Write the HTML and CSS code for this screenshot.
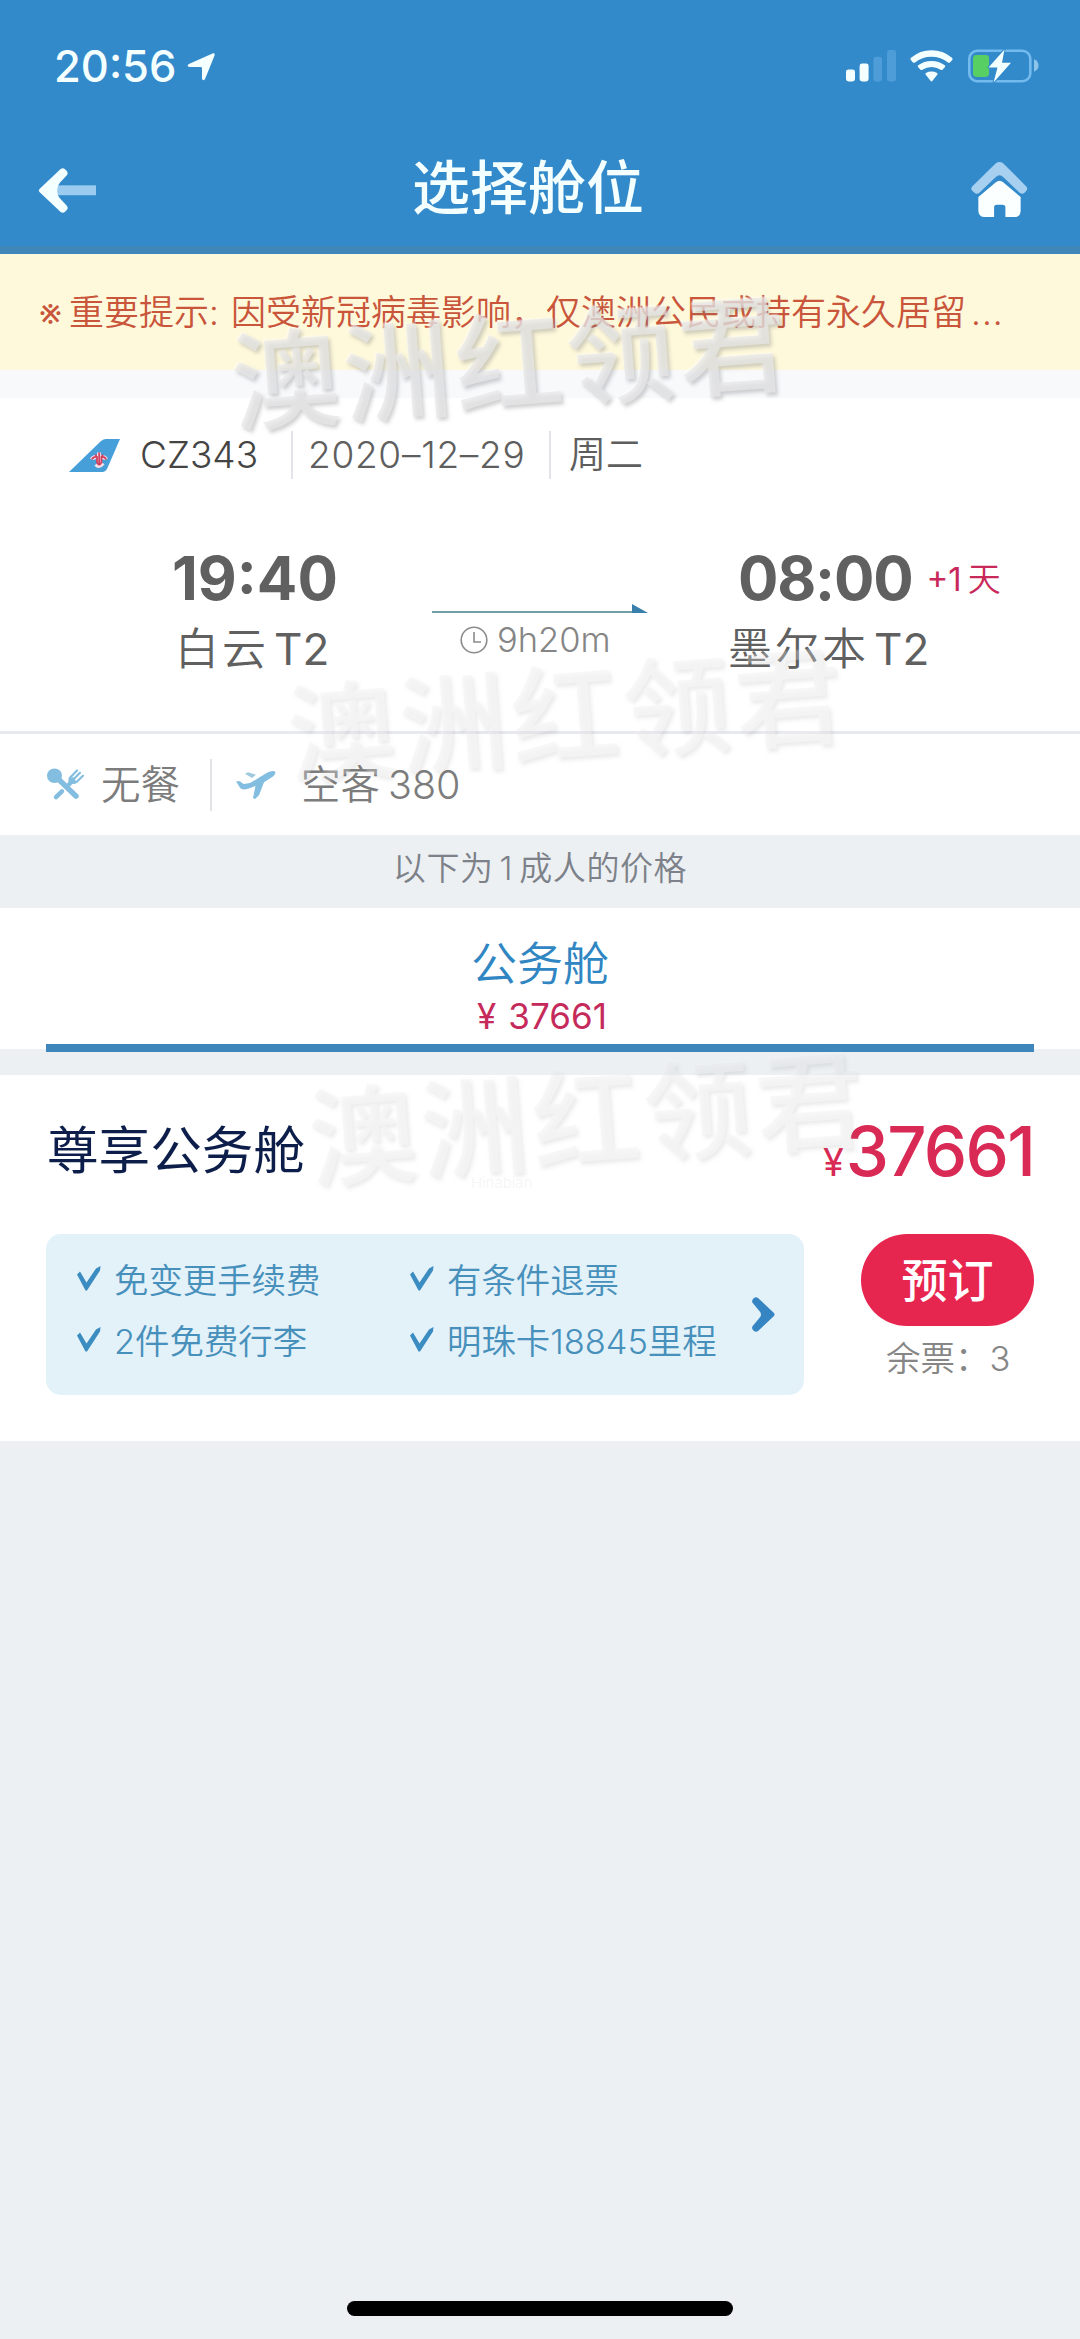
FILE: index.html
```html
<!DOCTYPE html>
<html lang="zh-CN">
<head>
<meta charset="utf-8">
<title>选择舱位</title>
<link rel="stylesheet" href="styles.css">
</head>
<body>
<div class="app">
  <header class="top">
    <div class="status">
      <span class="clock">20:56</span>
      <svg class="loc" viewBox="0 0 30 32" width="29" height="29" preserveAspectRatio="none"><path d="M27 1.5Q29 1 28.6 3.5L19 29Q18 31.500 16.500 31Q15.600 30.500 15.500 29V18Q15.500 16.500 14 16.500H3Q0 16 .8 14.600Q1 13.800 2.500 13Z" fill="#f4ffff"/></svg>
      <div class="indicators">
        <svg width="50" height="32" viewBox="0 0 50 33" preserveAspectRatio="none"><g fill="#f4ffff"><rect y="20" width="9" height="12.500" rx="2.500"/><rect x="13.600" y="14" width="9" height="18.500" rx="2.500"/></g><g fill="#4e9dd8"><rect x="27.500" y="7" width="8.500" height="25.500" rx="2.500"/><rect x="41" y="0" width="9" height="32.500" rx="2.500"/></g></svg>
        <svg class="wifi" width="43" height="32" viewBox="0 0 43 33" preserveAspectRatio="none" fill="#f4ffff"><path d="M.6 10Q0 9 1 8Q10 .3 21.500 .3T42 8Q43 9 42.400 10L40 12.800Q39 13.600 38 12.800Q31 7 21.500 7T5 12.800Q4 13.600 3 12.800Z"/><path d="M8 17.500Q7.300 16.600 8.200 15.700Q14 11.300 21.500 11.300T34.800 15.700Q35.700 16.600 35 17.500L32.500 20.300Q31.500 21 30.600 20.300Q26.500 17.500 21.500 17.500T12.400 20.300Q11.500 21 10.500 20.300Z"/><path d="M15.600 25.200Q15 24.500 15.900 23.700Q18.500 22.200 21.500 22.200T27.100 23.700Q28 24.500 27.400 25.200L22.500 31.800Q21.500 33 20.500 31.800Z"/></svg>
        <svg width="72" height="36" viewBox="0 0 72 38" preserveAspectRatio="none"><rect x="1.300" y="3" width="61" height="32" rx="8" fill="none" stroke="#73bbee" stroke-width="2.600"/><path d="M66 12Q70.500 14 70.500 18.500T66 25Z" fill="#8cc4ea"/><rect x="5" y="7.500" width="16" height="23" rx="3.500" fill="#58cf62"/><path d="M36.500 1.500L20.500 20.500H29.500L25.500 36.500L43 15.500H34Z" fill="#f4ffff" stroke="#338acb" stroke-width="2" paint-order="stroke" stroke-linejoin="round"/></svg>
      </div>
    </div>
    <div class="nav">
      <svg class="back" width="59" height="47" viewBox="0 0 60 50" preserveAspectRatio="none"><rect x="18" y="19.500" width="41" height="10.500" fill="#9ccbf0"/><path d="M1.500 23.500L23 2.200Q25.500 .5 27.500 2.500L29.500 4.500Q31 6.500 29.500 8.500L22 17Q19.500 20 19.500 25T22 33L29.500 41.500Q31 43.500 29.500 45.500L27.500 47.500Q25.500 49.500 23 47.800L1.500 26.500Q0 25 1.500 23.500Z" fill="#f4ffff"/></svg>
      <h1>选择舱位</h1>
      <svg class="home" width="59" height="57" viewBox="0 0 60 60" preserveAspectRatio="none"><path d="M26 2.500Q30 -.5 34 2.500L57.500 27Q59 29 57.500 31L55.500 33.500Q53 35.500 50.500 33.500L34 17Q30 13 26 17L9.500 33.500Q7 35.500 4.500 33.500L2 31Q.5 29 2 27Z" fill="#a6cff0"/><path d="M26 22.500Q30 19 34 22.500L51.500 38V52Q51.500 59 45 59H36V49Q36 46 33 46H27Q24.500 46 24.500 49V59H15Q8.500 59 8.500 52V38Z" fill="#fbffff"/></svg>
    </div>
  </header>

  <div class="notice"><span class="mark">※</span><span class="lead">重要提示:</span><span>因受新冠病毒影响，仅澳洲公民或持有永久居留</span><span class="dots">...</span></div>

  <section class="flight">
    <div class="flight-head">
      <svg class="tail" width="51" height="33" viewBox="0 0 51 34" preserveAspectRatio="none"><path d="M0 34L32 2Q34.500 0 37 0H51L38 31Q36.500 34 34 34Z" fill="#479fda"/><g fill="none" stroke="#f6dfe6" stroke-width="4"><path d="M23 21Q24 18 28 19M37 21Q36 18 32 19M27 26Q30 30 34 25M30 14V27"/></g><g fill="none" stroke="#d2405f" stroke-width="1.800"><path d="M23 21Q24 18 28 18.500V24Q30 29 32.500 24V18.500Q36 18 37 21M30.200 14V27M27 16V18M33.500 16V18"/></g></svg>
      <span class="no">CZ343</span><span class="date">2020–12–29</span><span class="week">周二</span>
    </div>
    <div class="route">
      <div class="stop from"><div class="time">19:40</div><div class="city">白云<span>T2</span></div></div>
      <div class="duration">
        <svg width="216" height="10" viewBox="0 0 216 10"><path d="M0 8H204" stroke="#709ea6" stroke-width="2"/><path d="M200 0L216 9H200Z" fill="#397fac"/></svg>
        <div class="dur-text"><svg width="28" height="28" viewBox="0 0 28 28" fill="none" stroke="#8b8b8b" stroke-width="1.600"><circle cx="14" cy="14" r="12.800"/><path d="M14 6V16H21"/></svg><span>9h20m</span></div>
      </div>
      <div class="stop to"><div class="time">08:00<span class="plus">+1<i>天</i></span></div><div class="city">墨尔本<span>T2</span></div></div>
    </div>
    <div class="extras">
      <svg class="meal" width="38" height="33" viewBox="0 0 38 34" preserveAspectRatio="none"><g stroke="#83bde0" stroke-linecap="round" fill="none"><path d="M8 8L29 29" stroke-width="5.500"/><path d="M9 30L15 24M22 17L26 12" stroke-width="4.500"/><path d="M23 10Q21 14 25 15Q28 16 30 14L36 8M23 10L30 2.500M26 12L33 5" stroke-width="2.200"/></g><circle cx="7.500" cy="8" r="7.500" fill="#83bde0"/><path d="M23 9L30 14Q26 17 22 16Z" fill="#83bde0"/></svg>
      <span class="meal-text">无餐</span>
      <svg class="plane" width="40" height="29" viewBox="0 0 40 31" preserveAspectRatio="none"><path d="M0 12L4 12Q6 14 8 15L14 14L31 3Q36 0 39 1.500Q40.500 4 37 7L28 13L23 27L19 31L17 30L19.500 17L12 20Q6 22 4 19Z" fill="#83bde0"/><path d="M9 4L12 2.500L20 5L16 8.500Z" fill="#9fc9df"/></svg>
      <span class="craft">空客<b>380</b></span>
    </div>
  </section>

  <div class="hint">以下为<span>1</span>成人的价格</div>

  <div class="tabs"><div class="tab"><div class="cabin">公务舱</div><div class="fare"><span>¥</span>37661</div></div></div>

  <section class="offer">
    <div class="offer-head"><h2>尊享公务舱</h2><div class="price"><span class="yen">¥</span><span class="amount">37661</span></div></div>
    <div class="offer-body">
      <div class="perks">
        <ul>
          <li><svg class="tick" viewBox="0 0 24 25"><path d="M0 8.500L3 5.500L9.500 16.500L19 2.500L23.500 0L23 4.500L10 24.500H8.500Z"/></svg>免变更手续费</li>
          <li><svg class="tick" viewBox="0 0 24 25"><path d="M0 8.500L3 5.500L9.500 16.500L19 2.500L23.500 0L23 4.500L10 24.500H8.500Z"/></svg>有条件退票</li>
          <li><svg class="tick" viewBox="0 0 24 25"><path d="M0 8.500L3 5.500L9.500 16.500L19 2.500L23.500 0L23 4.500L10 24.500H8.500Z"/></svg><b>2</b>件免费行李</li>
          <li><svg class="tick" viewBox="0 0 24 25"><path d="M0 8.500L3 5.500L9.500 16.500L19 2.500L23.500 0L23 4.500L10 24.500H8.500Z"/></svg>明珠卡<b>18845</b>里程</li>
        </ul>
        <svg class="more" width="23" height="35" viewBox="0 0 23 37" preserveAspectRatio="none"><path d="M6 1L22 17Q23 18.500 22 20L6 36Q4 37.500 2 36L1 35Q-.5 33 .5 31L8 21.500Q10 18.500 8 15.500L.5 6Q-.5 4 1 2L2 1Q4 -.5 6 1Z" fill="#3585c3"/></svg>
      </div>
      <div class="book"><button>预订</button><p>余票：<b>3</b></p></div>
    </div>
  </section>

  <div class="home-bar"></div>

  <div class="stamp s1">澳洲红领君</div>
  <div class="stamp s2">澳洲红领君</div>
  <div class="stamp s3">澳洲红领君</div>
  <div class="tiny">Hinabian</div>
</div>
</body>
</html>
```
FILE: styles.css
```css
* { box-sizing: border-box; margin: 0; padding: 0; }
body { background: #ecf0f3; }
svg { display: block; flex: none; }
b, i { font-weight: inherit; font-style: normal; }

.app {
  position: relative;
  width: 1080px;
  height: 2339px;
  overflow: hidden;
  display: flex;
  flex-direction: column;
  background: #ecf0f3;
  font-family: Inter, "Noto Sans CJK SC", sans-serif;
  font-weight: 350;
  white-space: nowrap;
}
.app > * { flex: none; }

/* header */
.top { height: 254px; background: #338acb; border-bottom: 8px solid #3f86b9; color: #f4ffff; }
.status { height: 132px; padding: 0 40px 0 54px; display: flex; align-items: center; }
.clock { width: 133px; font-size: 43.500px; line-height: 60px; font-weight: 500; }
.indicators { margin-left: auto; display: flex; align-items: center; }
.wifi { margin: 0 15px 0 14px; }
.nav { height: 114px; padding: 0 51px 0 38px; display: flex; align-items: center; justify-content: space-between; }
.nav h1 { font-size: 58px; line-height: 70px; font-weight: 500; margin: -3px 0 0 -11px; }
.back { margin-top: 2px; }

/* notice */
.notice {
  height: 144px; padding: 0 0 1px 39px; display: flex; align-items: center;
  background: #fef9db; border-bottom: 28px solid #f8f9fb;
  color: #c9553b; font-size: 35px; line-height: 50px;
}
.mark { width: 30px; font-size: 40px; padding-top: 3px; }
.lead { width: 162px; }
.dots { letter-spacing: 1px; margin-left: 5px; }

/* flight */
.flight { height: 437px; background: #fff; }
.flight-head { height: 114px; padding-left: 69px; display: flex; align-items: center; color: #5e5e5e; font-size: 37px; line-height: 48px; }
.no { width: 151px; margin-left: 20px; color: #444; }
.date { height: 48px; width: 258px; padding-left: 15px; border-left: 2px solid #e4e4e8; letter-spacing: .7px; font-weight: 300; }
.week { height: 48px; padding-left: 18px; border-left: 2px solid #e4e4e8; }
.route { height: 222px; padding-top: 34px; display: grid; grid-template-columns: 432px 216px 432px; border-bottom: 3px solid #e8e8f0; }
.route .stop { color: #606060; }
.time { height: 64px; font-size: 60px; line-height: 64px; font-weight: 700; display: flex; }
.city { margin-top: 7px; font-size: 44px; line-height: 64px; letter-spacing: 3px; }
.city span { margin-left: 5px; letter-spacing: 0; font-weight: 400; }
.from .time { padding-left: 172px; }
.from .city { padding-left: 175px; }
.to .time { padding-left: 90px; letter-spacing: -1.200px; }
.to .city { padding-left: 80px; }
.plus { margin-left: 14px; padding-top: 1px; font-size: 33px; font-weight: 400; color: #c8295a; letter-spacing: 0; }
.plus i { font-size: 33px; margin-left: 6px; font-weight: 350; }
.duration { padding-top: 58px; }
.dur-text { margin-top: 1px; padding-left: 28px; display: flex; align-items: center; gap: 9px; color: #858585; font-size: 34.500px; line-height: 50px; }
.extras { height: 101px; padding-left: 47px; display: flex; align-items: center; font-size: 39.500px; line-height: 52px; color: #7c7c7c; }
.meal-text { width: 127px; padding-left: 16px; border-right: 2px solid #e4e4e8; }
.plane { margin: 0 25px 0 24px; }
.craft b { margin-left: 8px; }

.hint { height: 73px; text-align: center; font-size: 33px; line-height: 66px; letter-spacing: .6px; color: #7d8189; }
.hint span { margin: 0 6px; }

/* cabin tabs */
.tabs { height: 141px; padding: 0 46px; background: #fff; }
.tab { height: 144px; padding-top: 25px; border-bottom: 8px solid #3f86bd; text-align: center; position: relative; }
.cabin { font-size: 46px; line-height: 60px; color: #2f86c2; }
.fare { padding-left: 4px; font-size: 35px; line-height: 47px; font-weight: 400; color: #c52a5b; }
.fare span { margin-right: 12px; }

/* offer */
.offer { height: 366px; margin-top: 26px; padding: 44px 46px 0; background: #fff; }
.offer-head { height: 115px; display: flex; justify-content: space-between; }
.offer-head h2 { margin-left: 1px; font-size: 51.600px; line-height: 62px; font-weight: 400; color: #0d1e4a; }
.price { display: flex; align-items: baseline; color: #d82a54; line-height: 64px; }
.yen { font-size: 38px; font-weight: 400; margin-right: 2px; }
.amount { font-size: 69px; font-weight: 500; letter-spacing: -1.800px; }
.offer-body { display: flex; justify-content: space-between; }
.perks { width: 758px; height: 161px; border-radius: 15px; background: #e3f1f9; display: flex; align-items: center; }
.perks ul { width: 706px; height: 161px; padding: 17px 0 0 31px; list-style: none; display: grid; grid-template-columns: 333px 340px; grid-auto-rows: 60.500px; }
.perks li { display: flex; align-items: center; font-size: 34.400px; line-height: 60px; color: #4690bb; }
.tick { width: 24px; height: 25px; margin: -5px 13px 0 0; fill: #3b8cc0; }
.book { width: 173px; text-align: center; }
.book button { display: block; width: 173px; height: 92px; border: 0; border-radius: 46px; background: #e72650; color: #fff; font: 500 46px/92px Inter, "Noto Sans CJK SC", sans-serif; }
.book p { margin-top: 7px; font-size: 34.500px; line-height: 52px; color: #868686; text-align: left; padding-left: 25px; }

.home-bar { width: 386px; height: 15px; margin: 860px auto 0; border-radius: 8px; background: #000; }

/* stamps laid over the page */
.stamp {
  position: absolute; width: 580px; height: 130px; text-align: center;
  font-size: 108px; line-height: 130px; letter-spacing: 4px; font-weight: 500;
  transform: rotate(-4.300deg); color: rgba(228, 228, 230, .75);
  text-shadow: 2px 3px 4px rgba(120, 120, 125, .4), -1px -1px 2px rgba(255, 255, 255, .7);
  pointer-events: none;
}
.s1 { left: 221px; top: 299px; opacity: .85; }
.s2 { left: 277px; top: 651px; opacity: .35; }
.s3 { left: 298px; top: 1055px; opacity: .35; }
.tiny { position: absolute; left: 471px; top: 1173px; font-size: 15px; line-height: 20px; color: #f5f5f5; }
```
